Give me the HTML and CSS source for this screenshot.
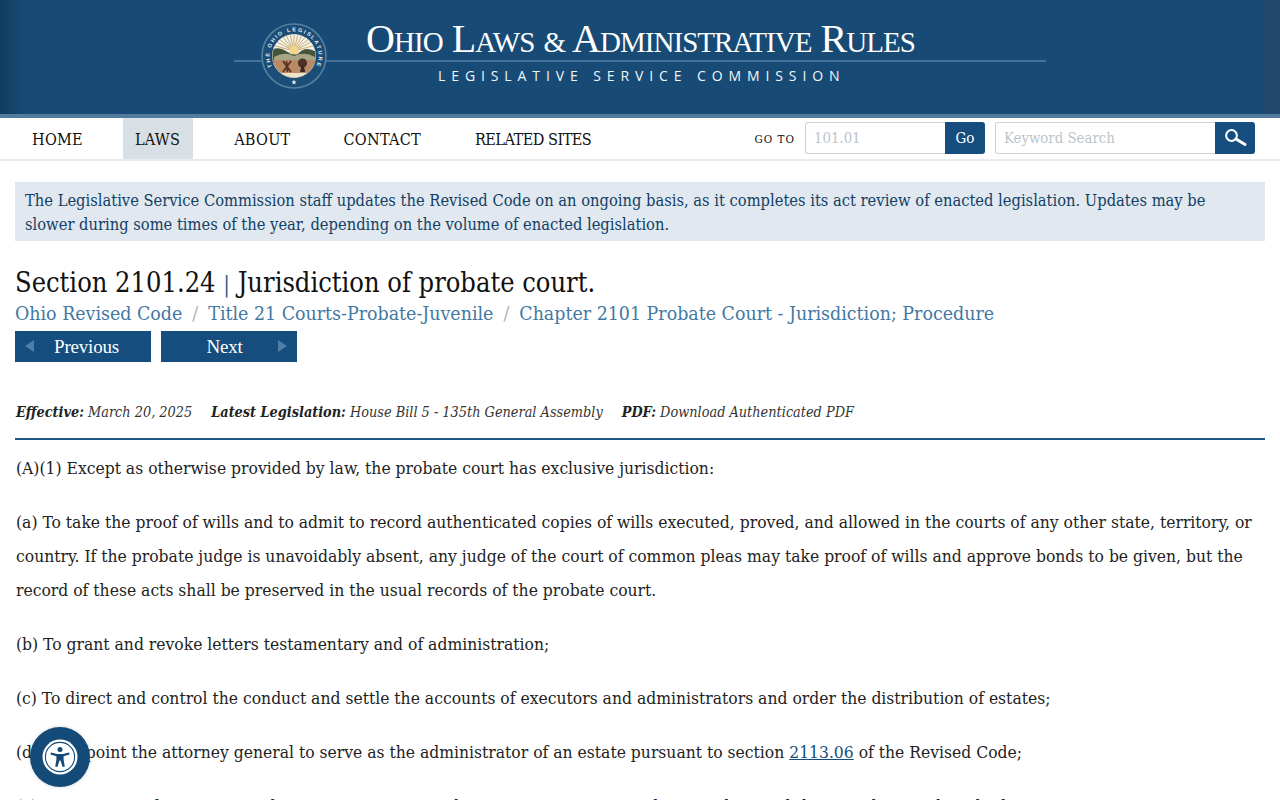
FILE: index.html
```html
<!DOCTYPE html>
<html lang="en">
<head>
<meta charset="utf-8">
<title>Section 2101.24 | Jurisdiction of probate court. - Ohio Revised Code</title>
<link rel="stylesheet" href="styles.css">
</head>
<body>
<header class="banner">
  <div class="banner-inner">
    <span class="banner-rule"></span>
    <svg class="seal" viewBox="0 0 66 66" width="66" height="66" aria-label="Seal of the Ohio Legislature">
      <defs>
        <path id="sealArc" d="M15.5 50 A24.5 24.5 0 1 1 50.5 50"/>
        <clipPath id="sealClip"><circle cx="33" cy="33" r="21.5"/></clipPath>
      </defs>
      <circle cx="33" cy="33" r="32" fill="#1b4d76" stroke="#55819f" stroke-width="1.6"/>
      <circle cx="33" cy="33" r="22" fill="#dcd8c2"/>
      <g clip-path="url(#sealClip)">
        <rect x="10" y="11" width="46" height="18" fill="#f2f3ee"/>
        <g stroke="#c6a45c" stroke-width=".9">
          <path d="M33 28 L33 11M33 28 L29 11M33 28 L25 12M33 28 L21 13M33 28 L17 15M33 28 L14 18M33 28 L11 22M33 28 L37 11M33 28 L41 12M33 28 L45 13M33 28 L49 15M33 28 L52 18M33 28 L55 22"/>
        </g>
        <circle cx="33" cy="27" r="4.5" fill="#f0d58b"/>
        <path d="M10 27 Q18 23 25 28 Q31 33 37 31 Q44 22 56 29 V40 H10Z" fill="#45553a"/>
        <path d="M13 34 Q24 28 33 33 Q44 28 54 34 V39 H13Z" fill="#a6a585"/>
        <rect x="10" y="37" width="46" height="19" fill="#b98a66"/>
        <rect x="10" y="50" width="46" height="6" fill="#ece4cc"/>
        <path d="M22 38 L30 49 M30 38 L22 49 M25.5 38 L26.5 49" stroke="#5a3226" stroke-width="1.8" fill="none"/>
        <circle cx="41.5" cy="40" r="4.6" fill="#4b3128"/>
        <path d="M40.6 42 h2 l1.6 7 h-5.2z" fill="#3a2a22"/>
      </g>
      <text class="seal-text"><textPath href="#sealArc" startOffset="50%" text-anchor="middle">THE OHIO LEGISLATURE</textPath></text>
      <path d="M33 56.5l.7 1.8 1.9.1-1.5 1.2.5 1.9-1.6-1-1.6 1 .5-1.9-1.5-1.2 1.9-.1z" fill="#e6edf3"/>
    </svg>
    <div class="banner-text">
      <div class="banner-title">O<span class="sc">HIO</span> L<span class="sc">AWS</span> <span class="sc">&amp;</span> A<span class="sc">DMINISTRATIVE</span> R<span class="sc">ULES</span></div>
      <div class="banner-sub">LEGISLATIVE SERVICE COMMISSION</div>
    </div>
  </div>
</header>

<nav class="topnav">
  <ul class="menu">
    <li class="menu-item">HOME</li>
    <li class="menu-item menu-item-active">LAWS</li>
    <li class="menu-item">ABOUT</li>
    <li class="menu-item">CONTACT</li>
    <li class="menu-item menu-item-tight">RELATED SITES</li>
  </ul>
  <div class="tools">
    <span class="goto-label">GO TO</span>
    <div class="field field-goto"><span class="field-ph">101.01</span></div>
    <button class="field-btn go-btn">Go</button>
    <div class="field field-search"><span class="field-ph">Keyword Search</span></div>
    <button class="field-btn search-btn" aria-label="Search">
      <svg viewBox="0 0 24 20" width="24" height="20"><circle cx="8.5" cy="7.5" r="5.4" fill="none" stroke="#fff" stroke-width="2"/><path d="M13 11 L22 16.5" stroke="#fff" stroke-width="3" stroke-linecap="round"/></svg>
    </button>
  </div>
</nav>

<main class="content">
  <div class="notice">The Legislative Service Commission staff updates the Revised Code on an ongoing basis, as it completes its act review of enacted legislation. Updates may be slower during some times of the year, depending on the volume of enacted legislation.</div>

  <h1 class="section-title">Section 2101.24 <span class="title-bar">|</span> Jurisdiction of probate court.</h1>
  <div class="crumbs">
    <a class="crumb">Ohio Revised Code</a><span class="crumb-sep">/</span><a class="crumb">Title 21 Courts-Probate-Juvenile</a><span class="crumb-sep">/</span><a class="crumb">Chapter 2101 Probate Court - Jurisdiction; Procedure</a>
  </div>
  <div class="pager">
    <a class="pager-btn pager-prev"><span class="tri tri-left"></span><span>Previous</span></a>
    <a class="pager-btn pager-next"><span>Next</span><span class="tri tri-right"></span></a>
  </div>

  <div class="meta">
    <span class="meta-item"><b>Effective:</b> March 20, 2025</span>
    <span class="meta-item"><b>Latest Legislation:</b> House Bill 5 - 135th General Assembly</span>
    <span class="meta-item"><b>PDF:</b> Download Authenticated PDF</span>
  </div>

  <section class="law">
    <p>(A)(1) Except as otherwise provided by law, the probate court has exclusive jurisdiction:</p>
    <p>(a) To take the proof of wills and to admit to record authenticated copies of wills executed, proved, and allowed in the courts of any other state, territory, or country. If the probate judge is unavoidably absent, any judge of the court of common pleas may take proof of wills and approve bonds to be given, but the record of these acts shall be preserved in the usual records of the probate court.</p>
    <p>(b) To grant and revoke letters testamentary and of administration;</p>
    <p>(c) To direct and control the conduct and settle the accounts of executors and administrators and order the distribution of estates;</p>
    <p>(d) To appoint the attorney general to serve as the administrator of an estate pursuant to section <a class="law-link">2113.06</a> of the Revised Code;</p>
    <p>(e) To appoint and remove guardians, conservators, and testamentary trustees, direct and control their conduct, and settle their accounts;</p>
  </section>
</main>

<button class="a11y" aria-label="Accessibility">
  <svg viewBox="0 0 36 36" width="36" height="36">
    <circle cx="18" cy="18" r="17.5" fill="#fff"/>
    <circle cx="18" cy="18" r="14.6" fill="none" stroke="#144a78" stroke-width="1.1"/>
    <circle cx="18" cy="10.4" r="2.5" fill="#144a78"/>
    <path d="M9 13.6 L15 15 H21 L27 13.6 L27.5 15.4 L21.6 17.2 V20.5 L22.8 27.5 L20.6 27.9 L18.5 21.5 H17.5 L15.4 27.9 L13.2 27.5 L14.4 20.5 V17.2 L8.5 15.4Z" fill="#144a78"/>
  </svg>
</button>
</body>
</html>
```

FILE: styles.css
```css
* { box-sizing: border-box; }
html, body { margin: 0; padding: 0; }
body { font-family: "DejaVu Serif Condensed", "DejaVu Serif", serif; font-stretch: condensed; color: #222; background: #fff; overflow-x: hidden; }

.banner {
  height: 118px;
  background: linear-gradient(90deg, #113c60 0, #174b75 2%, #174b75 98.6%, #22496c 98.7%, #22496c 100%);
  border-bottom: 4px solid #517c9d;
}
.banner-inner {
  position: relative;
  width: 812px;
  margin: 0 auto;
  height: 114px;
  display: flex;
}
.banner-rule {
  position: absolute;
  left: 0;
  right: 0;
  top: 60px;
  height: 2px;
  background: #42729a;
}
.seal { position: relative; margin: 23px 0 0 27px; flex: none; }
.seal-text { font: bold 5.4px "Liberation Sans", sans-serif; fill: #e6edf3; letter-spacing: 1.7px; }
.banner-text { position: relative; margin-left: 39px; font-family: "Liberation Serif", serif; font-stretch: normal; }
.banner-title {
  margin-top: 17px;
  font-size: 40px;
  line-height: 44px;
  color: #fff;
  white-space: nowrap;
  letter-spacing: -.95px;
}
.sc { font-size: 29px; }
.banner-sub {
  margin: 3px 0 0 72px;
  font: 14px/18px "Open Sans", sans-serif;
  letter-spacing: 5.9px;
  color: #f2f6f9;
  white-space: nowrap;
}

.topnav {
  height: 43px;
  display: flex;
  justify-content: space-between;
  border-bottom: 2px solid #e9ecee;
  padding: 0 25px 0 20px;
}
.menu { display: flex; gap: 29px; list-style: none; margin: 0; padding: 0; }
.menu-item {
  padding: 0 12px;
  font-size: 16.1px;
  letter-spacing: .25px;
  line-height: 43px;
  color: #111;
}
.menu-item-tight { letter-spacing: -.5px; margin-left: 1px; }
.menu-item-active { background: #d9e0e5; height: 41px; margin-left: -1px; padding-right: 13px; }
.tools { display: flex; align-items: flex-start; padding-top: 4px; }
.goto-label { font-size: 11.5px; line-height: 35px; letter-spacing: 1px; margin-right: 10px; color: #111; }
.field {
  height: 32px;
  border: 1px solid #ccd2d8;
  border-right: 0;
  border-radius: 3px 0 0 3px;
  padding-left: 8px;
  background: #fff;
}
.field-ph { font-size: 14.8px; line-height: 30px; color: #bcc3ca; }
.field-goto { width: 140px; }
.field-search { width: 220px; margin-left: 10px; }
.field-btn {
  height: 32px;
  width: 40px;
  padding: 0;
  border: 0;
  border-radius: 0 3px 3px 0;
  background: #144d7e;
  color: #fff;
  font: condensed 15px "DejaVu Serif", serif;
  display: flex;
  align-items: center;
  justify-content: center;
}

.content { padding: 21px 15px 0; }
.notice {
  background: #e1e8ef;
  color: #123f66;
  padding: 7px 10px 0;
  font-size: 16.35px;
  line-height: 24px;
  height: 59px;
}
.section-title {
  margin: 25px 0 0;
  font-size: 27px;
  line-height: 33px;
  font-weight: normal;
  color: #111;
}
.title-bar { color: #2f6390; font-size: 22px; }
.crumbs { font-size: 19.4px; line-height: 26px; color: #4478a2; }
.crumb { color: #4478a2; }
.crumb-sep { color: #a9b4bd; margin: 0 10px; }
.pager { display: flex; gap: 10px; margin-top: 4px; font-family: "Liberation Serif", serif; font-stretch: normal; }
.pager-btn {
  width: 136px;
  height: 31px;
  background: #144d7e;
  color: #fff;
  font-size: 19px;
  letter-spacing: -.2px;
  line-height: 31px;
  display: flex;
  align-items: center;
  justify-content: center;
  position: relative;
}
.pager-prev { padding-left: 7px; }
.pager-next { padding-right: 9px; }
.tri { position: absolute; top: 9px; width: 0; height: 0; border-top: 6px solid transparent; border-bottom: 6px solid transparent; }
.tri-left { left: 10px; border-right: 9px solid #4f7fa8; }
.tri-right { right: 10px; border-left: 9px solid #4f7fa8; }
.meta {
  margin-top: 38px;
  padding: 0 0 14px 1px;
  border-bottom: 2px solid #1f5583;
  font-size: 14.35px;
  line-height: 24px;
  font-style: italic;
  color: #333;
  display: flex;
  gap: 19px;
}
.meta b { color: #222; }
.law { padding: 11px 1px 0; }
.law p { margin: 0 0 20px; font-size: 17.35px; line-height: 34px; color: #222; }
.law-link { color: #144d7e; text-decoration: underline; }

.a11y {
  position: fixed;
  left: 30px;
  top: 727px;
  width: 60px;
  height: 60px;
  padding: 0;
  border: 0;
  border-radius: 50%;
  background: #144a78;
  display: flex;
  align-items: center;
  justify-content: center;
  box-shadow: 0 0 4px rgba(0,0,0,.15);
}
```
